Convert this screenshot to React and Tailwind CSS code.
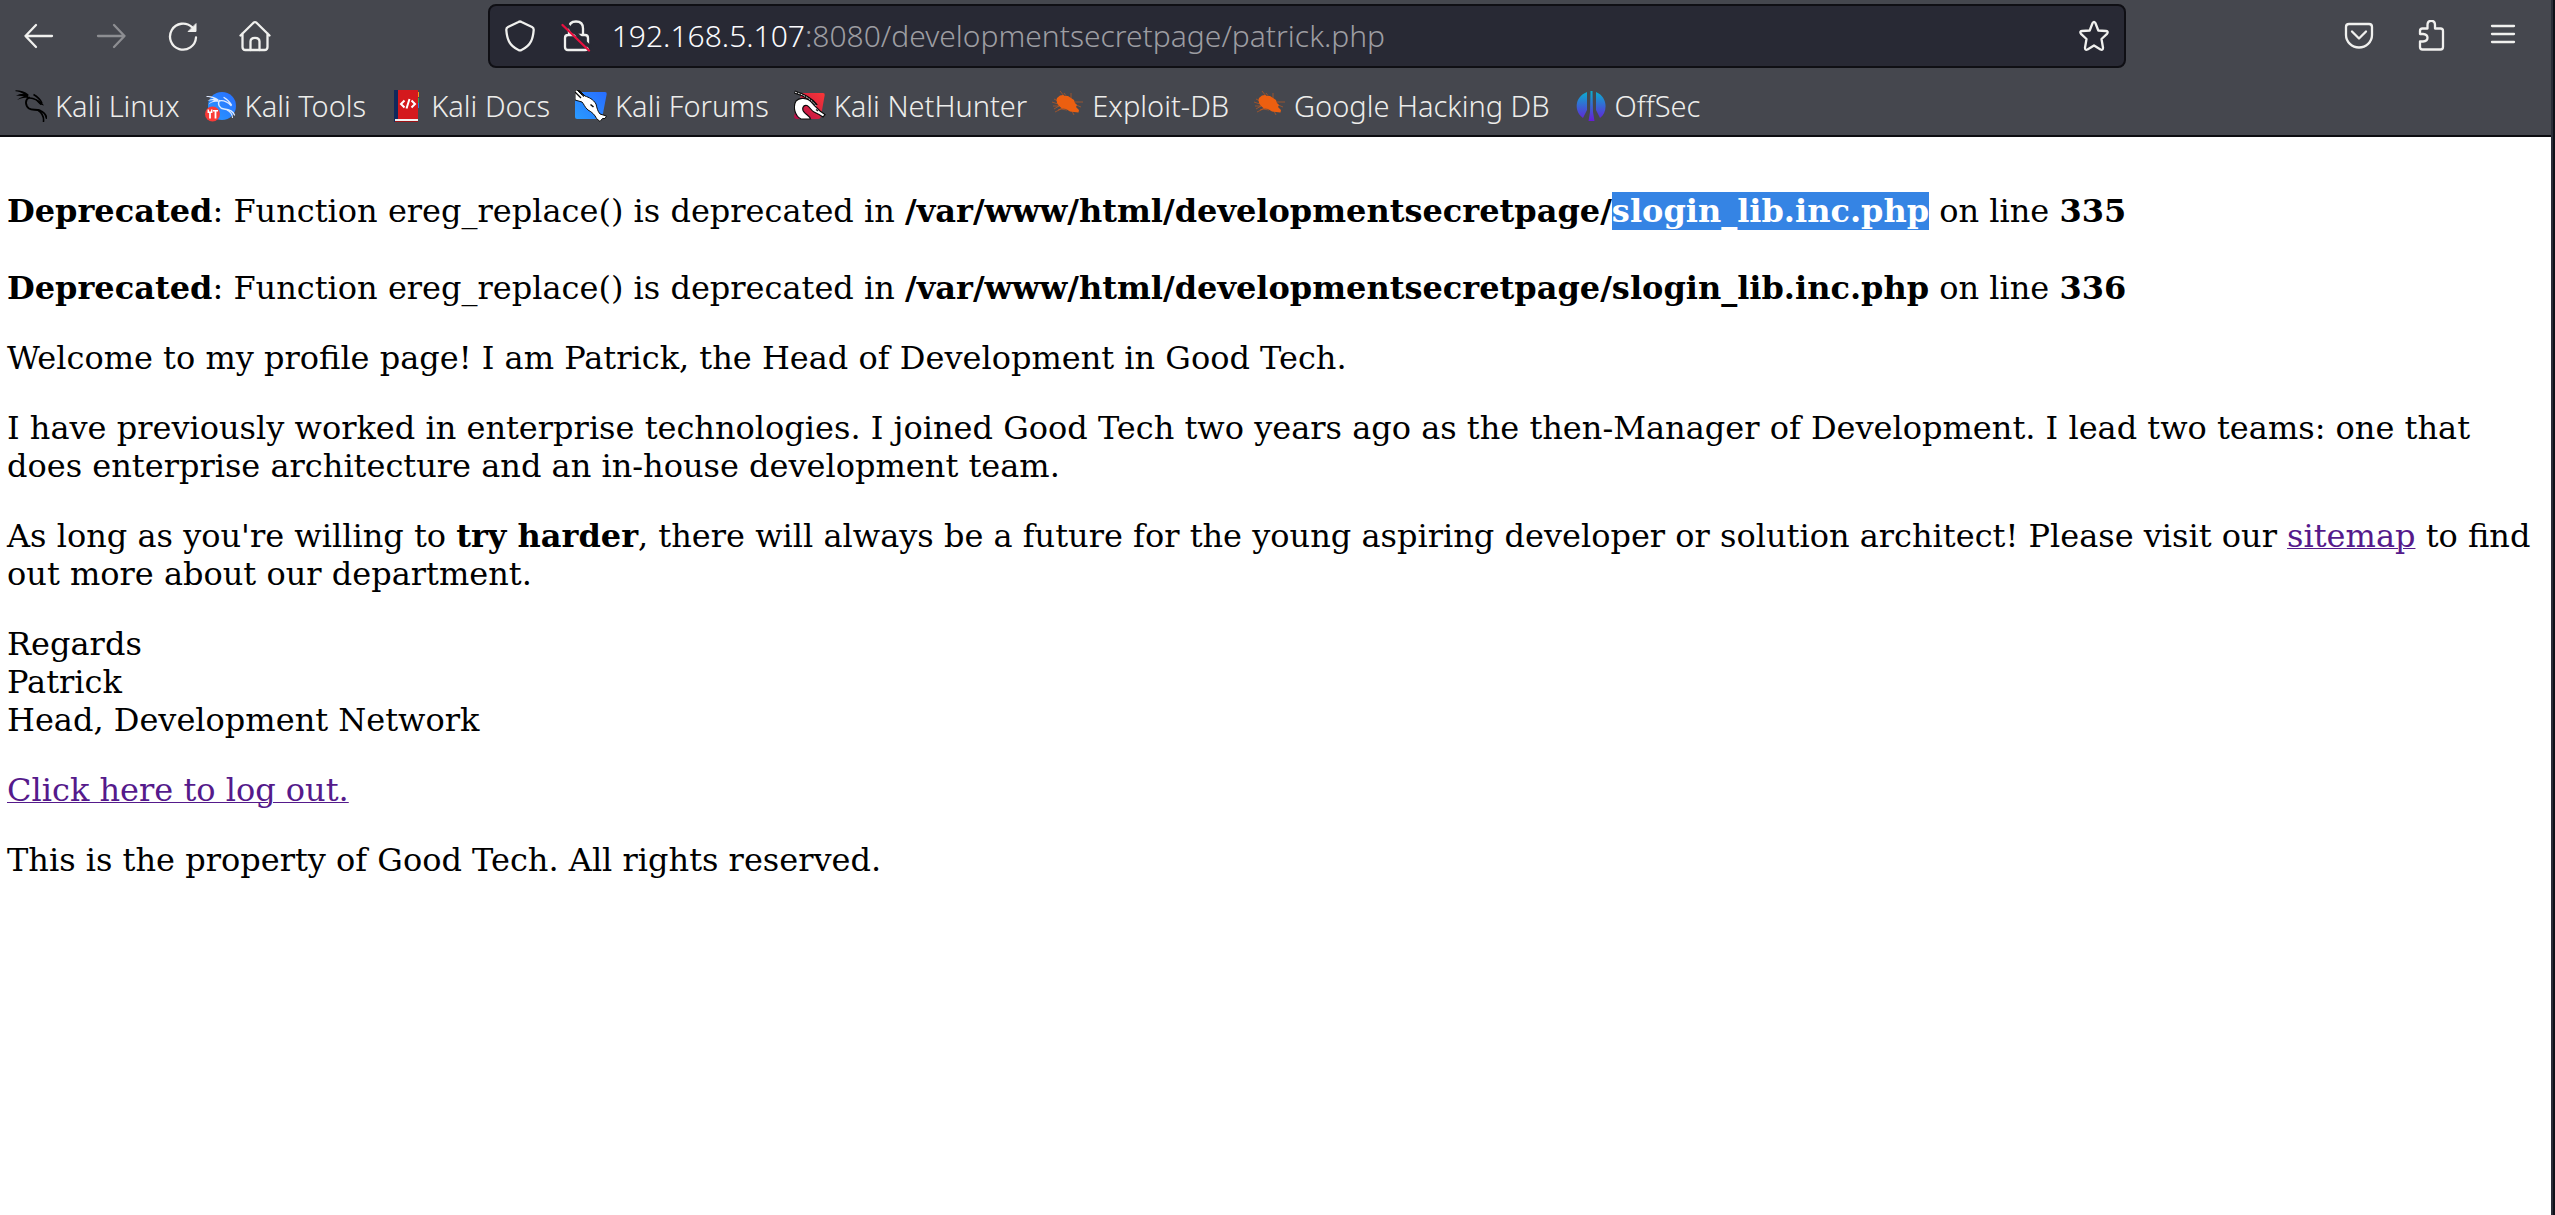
function ToolButton({ label, children, dim }) {
  return (
    <button
      type="button"
      aria-label={label}
      disabled={dim}
      className="flex h-18 w-18 shrink-0 items-center justify-center text-[#f0f0ee] disabled:text-[#8d8e92]"
    >
      {children}
    </button>
  );
}

function Glyph({ children }) {
  return (
    <svg
      viewBox="0 0 32 32"
      className="size-8 shrink-0"
      fill="none"
      stroke="currentColor"
      strokeWidth="2.3"
      strokeLinecap="round"
      strokeLinejoin="round"
      aria-hidden="true"
    >
      {children}
    </svg>
  );
}

function Favicon({ children }) {
  return (
    <svg viewBox="0 0 32 32" className="size-8 shrink-0" aria-hidden="true">
      {children}
    </svg>
  );
}

function Gradient({ id, from, to, vertical }) {
  return (
    <defs>
      <linearGradient id={id} gradientUnits="userSpaceOnUse" x1="0" y1={vertical ? 0 : 32} x2={vertical ? 0 : 32} y2={vertical ? 32 : 0}>
        <stop offset="0" stopColor={from} />
        <stop offset="1" stopColor={to} />
      </linearGradient>
    </defs>
  );
}

function KaliLinuxIcon() {
  return (
    <Favicon>
      <path d="M.5 .3C5 .2 10 1.500 13.500 4.500L13 8C9 7 5 8.500 2 10C5 7.500 7 7 9 6.500C6 5.500 3 5.500 1 6C4 4 7 4 9 4.200C6 2.200 3 1.500 .5 1.300Z" fill="#000" />
      <path d="M13 8C17 7.500 22 9 26 14.500M18.500 4.500C22 6.500 25 9 27 13" fill="none" stroke="#000" strokeWidth="1.500" />
      <path d="M20.500 9C24 10 27 12.500 29 15.500C26 15 24 14 22.500 12Z" fill="#000" />
      <path d="M14 7.500C9.500 10 10.500 16 14 18.500C17 20.500 21 19 25 20.500C28.500 22 31 24.500 31.500 28" fill="none" stroke="#000" strokeWidth="1.900" strokeLinecap="round" />
      <path d="M23 20C27 23 29 27 28.500 31.500" fill="none" stroke="#000" strokeWidth="1.600" strokeLinecap="round" />
    </Favicon>
  );
}

function KaliToolsIcon() {
  return (
    <Favicon>
      <Gradient id="tools" from="#2a9dff" to="#286bff" />
      <circle cx="17" cy="16" r="14" fill="url(#tools)" />
      <path d="M1.500 6C6 5.500 10 7 13.500 9.500L13.500 12C9 11 6 12.500 3.500 14.500C5 12 7 11.200 9 10.700C7 10 5 10.200 2.500 11C5 9 7 9 9 9C7 7.500 4 7 1.500 7Z" fill="#dce9ff" />
      <path d="M14 11C18 10 22 11.500 26 15.500M19 7.500C23 10 25 12 26.500 15M14.500 10.500C12 14 14.500 18.500 19 19C24 19.500 28 20.500 29.500 25" fill="none" stroke="#dce9ff" strokeWidth="1.300" strokeLinecap="round" />
      <path d="M22 20C26 22 27.500 24 27.500 28" fill="none" stroke="#dce9ff" strokeWidth="1.100" />
      <circle cx="7.500" cy="24" r="7.500" fill="#f93a37" />
      <path d="M5 22V28.500M10.500 20.500V28.500" stroke="#fff" strokeWidth="1.800" />
      <path d="M3.300 19.500V22.200H6.700V19.500M8 20.700H13" stroke="#fff" strokeWidth="1.500" fill="none" />
    </Favicon>
  );
}

function KaliDocsIcon() {
  return (
    <Favicon>
      <path d="M3 0H7V32H3Z" fill="#11295c" />
      <path d="M7 0H27V29H7Z" fill="#d4191d" />
      <path d="M27 2H28V7H27Z" fill="#f39a16" />
      <path d="M27 8H28V13H27Z" fill="#2eaa55" />
      <path d="M27 13H28V18H27Z" fill="#2b7fe0" />
      <path d="M4 29H27V31H4Z" fill="#f2f2f2" />
      <path d="M4 31H27V32H4Z" fill="#9d1114" />
      <path d="M13.500 10.500L10 14L13.500 17.500M20.500 10.500L24 14L20.500 17.500M18.500 9L15.500 18.500" fill="none" stroke="#fff" strokeWidth="2" />
    </Favicon>
  );
}

function KaliForumsIcon() {
  return (
    <Favicon>
      <Gradient id="forums" from="#2a9dff" to="#286bff" />
      <path d="M4 2H30Q32 2 31.700 4L27.500 26Q27 29 24 29H2Q0 29 0 27V6Z" fill="url(#forums)" />
      <path
        d="M0 0L2 0L7 5L4 0L10 6C14 7.500 18 9 21 14C22 18 22.500 21 25 24L31.500 26L30 28.500L27.500 28.500L25 31.500L21.500 28.500C20 25 17 22 13 20C9.500 17 9 14 7 12L0 10Z"
        fill="#fff"
        stroke="#0b0b0b"
      />
      <path d="M3 0L9 6.500M0 2L6 8" stroke="#0b0b0b" strokeWidth="1.300" />
      <path d="M15.500 14.500L18.500 17" stroke="#0b0b0b" strokeWidth="1.600" />
    </Favicon>
  );
}

function NetHunterIcon() {
  return (
    <Favicon>
      <Gradient id="hunter" from="#b00b4c" to="#ff3a34" />
      <path d="M8 3H29Q31 3 30.700 5L27 26Q26.500 29 24 29H3Q0 29 0 26Z" fill="url(#hunter)" />
      <path
        d="M2 11C5 8 11 7.500 15 10C18 12 19 15 22 17L26 21L31 24.500L29 27L25 24.500L20 22C17 20.500 16 17 13 15.500C9 14.500 7.500 19 10 22C12 25 16 26 16.500 29H7C1 26 -1.500 17 2 11Z"
        fill="#fff"
        stroke="#0b0b0b"
        strokeWidth="1.200"
      />
      <path d="M.5 2C9 4.500 17 8 22.500 15.500" fill="none" stroke="#0b0b0b" strokeWidth="3" />
      <path d="M1 2.200C9 4.500 17 8.500 23 17" fill="none" stroke="#e5e5e5" strokeDasharray="2 1" />
      <path d="M22 19.500L24 21" stroke="#0b0b0b" strokeWidth="1.200" />
    </Favicon>
  );
}

function ExploitIcon() {
  return (
    <Favicon>
      <path d="M5 8L8 5.500L11 5L13 6L16 6L19 8L22 10L23 13L25 15L24 17L27 20L26.500 22.500L22 22L18 21.500L14 19L10 18.500L7 16L5 13L4.500 10Z" fill="#ec5f10" />
      <path
        d="M8 1L12 6M12 3L15 7M19 3L19 9M23 12H31M24 15L29 17M2 9L6 11M0 12L6 14M1 16H7M3 22L9 19L15 20M6 20L11 18M20 21L22 25M2 19L7 16"
        fill="none"
        stroke="#ec5f10"
        strokeOpacity="0.5"
      />
    </Favicon>
  );
}

function OffSecIcon() {
  return (
    <Favicon>
      <Gradient id="offsec" from="#05b6cf" to="#6a16d8" vertical />
      <path
        d="M12 2V20L8 28C-1 22 -1 7 12 2ZM21 2C33 7 33 22 25 28L21 20ZM15.500 1H17.500L18 22L19.500 31H13.500L15 22Z"
        fill="url(#offsec)"
      />
    </Favicon>
  );
}

const bookmarks = [
  ["Kali Linux", KaliLinuxIcon],
  ["Kali Tools", KaliToolsIcon],
  ["Kali Docs", KaliDocsIcon],
  ["Kali Forums", KaliForumsIcon],
  ["Kali NetHunter", NetHunterIcon],
  ["Exploit-DB", ExploitIcon],
  ["Google Hacking DB", ExploitIcon],
  ["OffSec", OffSecIcon],
];

function Toolbar() {
  return (
    <div className="flex h-18 items-center pr-3 pl-[3px]">
      <ToolButton label="Back">
        <Glyph><path d="M29 16H2.500M13 5L2.500 16L13 27" /></Glyph>
      </ToolButton>
      <ToolButton label="Forward" dim>
        <Glyph><path d="M3 16H29.500M19 5L29.500 16L19 27" /></Glyph>
      </ToolButton>
      <ToolButton label="Reload">
        <Glyph>
          <path d="M25 7.200A13 13 0 1 0 29 17.500" />
          <path d="M29 4V11.500H21.500Z" fill="currentColor" strokeWidth="1" />
        </Glyph>
      </ToolButton>
      <ToolButton label="Home">
        <Glyph>
          <path d="M1.500 15.500L14.500 2.700Q16 1.500 17.500 2.700L30.500 15.500M3.500 13.500V27Q3.500 30 6.500 30H25.500Q28.500 30 28.500 27V13.500" />
          <path d="M11.500 30V21.500Q11.500 17.800 16 17.800Q20.500 17.800 20.500 21.500V30" />
        </Glyph>
      </ToolButton>
      <div className="flex-[6]" />
      <div className="flex h-16 flex-[49] items-center rounded-lg border-2 border-[#0f0f14] bg-[#282934] px-3.5 text-[#f0f0ee]">
        <button type="button" aria-label="Tracking protection" className="shrink-0">
          <Glyph>
            <path d="M16 1.500Q15.300 1.500 14.500 2L4 7Q2.200 8 2.300 10C3 18 4.500 25.500 14.500 30Q16 30.800 17.500 30C27.500 25.500 29 18 29.700 10Q29.800 8 28 7L17.500 2Q16.700 1.500 16 1.500Z" />
          </Glyph>
        </button>
        <button type="button" aria-label="Connection not secure" className="ml-6 shrink-0">
          <Glyph>
            <path d="M9 15V8.500Q9 1.500 16 1.500Q23 1.500 23 8.500V15H25Q28 15 28 18V27Q28 30 25 30H8Q5 30 5 27V18Q5 15 8 15H23" />
            <path d="M4.500 2.500L31 28" stroke="#282934" strokeWidth="3.500" strokeLinecap="butt" />
            <path d="M2.500 5L29 30.500" stroke="#e9103f" />
          </Glyph>
        </button>
        <a href="#address" className="ml-5 flex-1 text-[30px] leading-10 font-[350] whitespace-nowrap text-[#9d9da2]">
          <span className="text-[#fbfbfe]">192.168.5.107</span>:8080/developmentsecretpage/patrick.php
        </a>
        <button type="button" aria-label="Bookmark this page" className="shrink-0">
          <Glyph>
            <path d="M14.600 3Q16 .8 17.400 3L20.300 10.500L28 11Q30.800 11.500 29 13.800L23.500 19L25 27.800Q25 30.500 22.500 29.500L16 25.500L9.500 29.500Q7 30.500 7 27.800L8.500 19L3 13.800Q1.200 11.500 4 11L11.700 10.500Z" />
          </Glyph>
        </button>
      </div>
      <div className="flex-[6]" />
      <ToolButton label="Save to Pocket">
        <Glyph>
          <path d="M6 4H26Q29 4 29 7V15C29 22 23 27.500 16 27.500C9 27.500 3 22 3 15V7Q3 4 6 4ZM9 11.500L16 18.500L23 11.500" />
        </Glyph>
      </ToolButton>
      <ToolButton label="Extensions">
        <Glyph>
          <path d="M5 14V11Q5 8.500 7.500 8.500H12.500V5Q12.500 .8 16.200 .8Q20 .8 20 5V8.500H25.500Q28 8.500 28 11V27Q28 29.500 25.500 29.500H7.500Q5 29.500 5 27V21.500H8Q12.500 21 12.500 17.700Q12.500 14.500 8 14Z" />
        </Glyph>
      </ToolButton>
      <ToolButton label="Menu">
        <Glyph><path d="M5 6H27M5 14H27M5 22H27" /></Glyph>
      </ToolButton>
    </div>
  );
}

export default function App() {
  return (
    <div className="flex min-h-screen bg-[#0f1119]">
      <div className="mr-0.5 flex flex-1 flex-col border-r-2 border-[#2a2d38] bg-white">
        <header className="border-b-2 border-[#0c0c10] bg-[#45474e] font-['Noto_Sans',sans-serif]">
          <Toolbar />
          <nav aria-label="Bookmarks" className="flex h-[63px] items-center gap-[25px] px-[15px] pt-1">
            {bookmarks.map(([name, Icon]) => (
              <a
                key={name}
                href="#bookmark"
                className="flex items-center gap-2 text-[29px] leading-10 font-[360] whitespace-nowrap text-[#ededeb]"
              >
                <Icon />
                {name}
              </a>
            ))}
          </nav>
        </header>
        <main className="flex flex-col gap-8 pt-[55px] pr-2 pl-[7px] font-['DejaVu_Serif',serif] text-[32px] leading-[38px] text-black">
          <div className="flex flex-col gap-[39px]">
            <p>
              <b>Deprecated</b>: Function ereg_replace() is deprecated in{" "}
              <b>
                /var/www/html/developmentsecretpage/<mark className="bg-[#3584e4] text-white">slogin_lib.inc.php</mark>
              </b>{" "}
              on line <b>335</b>
            </p>
            <p>
              <b>Deprecated</b>: Function ereg_replace() is deprecated in{" "}
              <b>/var/www/html/developmentsecretpage/slogin_lib.inc.php</b> on line <b>336</b>
            </p>
          </div>
          <p>Welcome to my profile page! I am Patrick, the Head of Development in Good Tech.</p>
          <p>
            I have previously worked in enterprise technologies. I joined Good Tech two years ago as the then-Manager of
            Development. I lead two teams: one that does enterprise architecture and an in-house development team.
          </p>
          <p>
            As long as you're willing to <b>try harder</b>, there will always be a future for the young aspiring developer
            or solution architect! Please visit our{" "}
            <a href="#sitemap" className="text-[#551a8b] underline decoration-1">sitemap</a> to find out more about our
            department.
          </p>
          <p>
            Regards
            <br />
            Patrick
            <br />
            Head, Development Network
          </p>
          <p>
            <a href="#logout" className="text-[#551a8b] underline decoration-1">Click here to log out.</a>
          </p>
          <p>This is the property of Good Tech. All rights reserved.</p>
        </main>
      </div>
    </div>
  );
}
